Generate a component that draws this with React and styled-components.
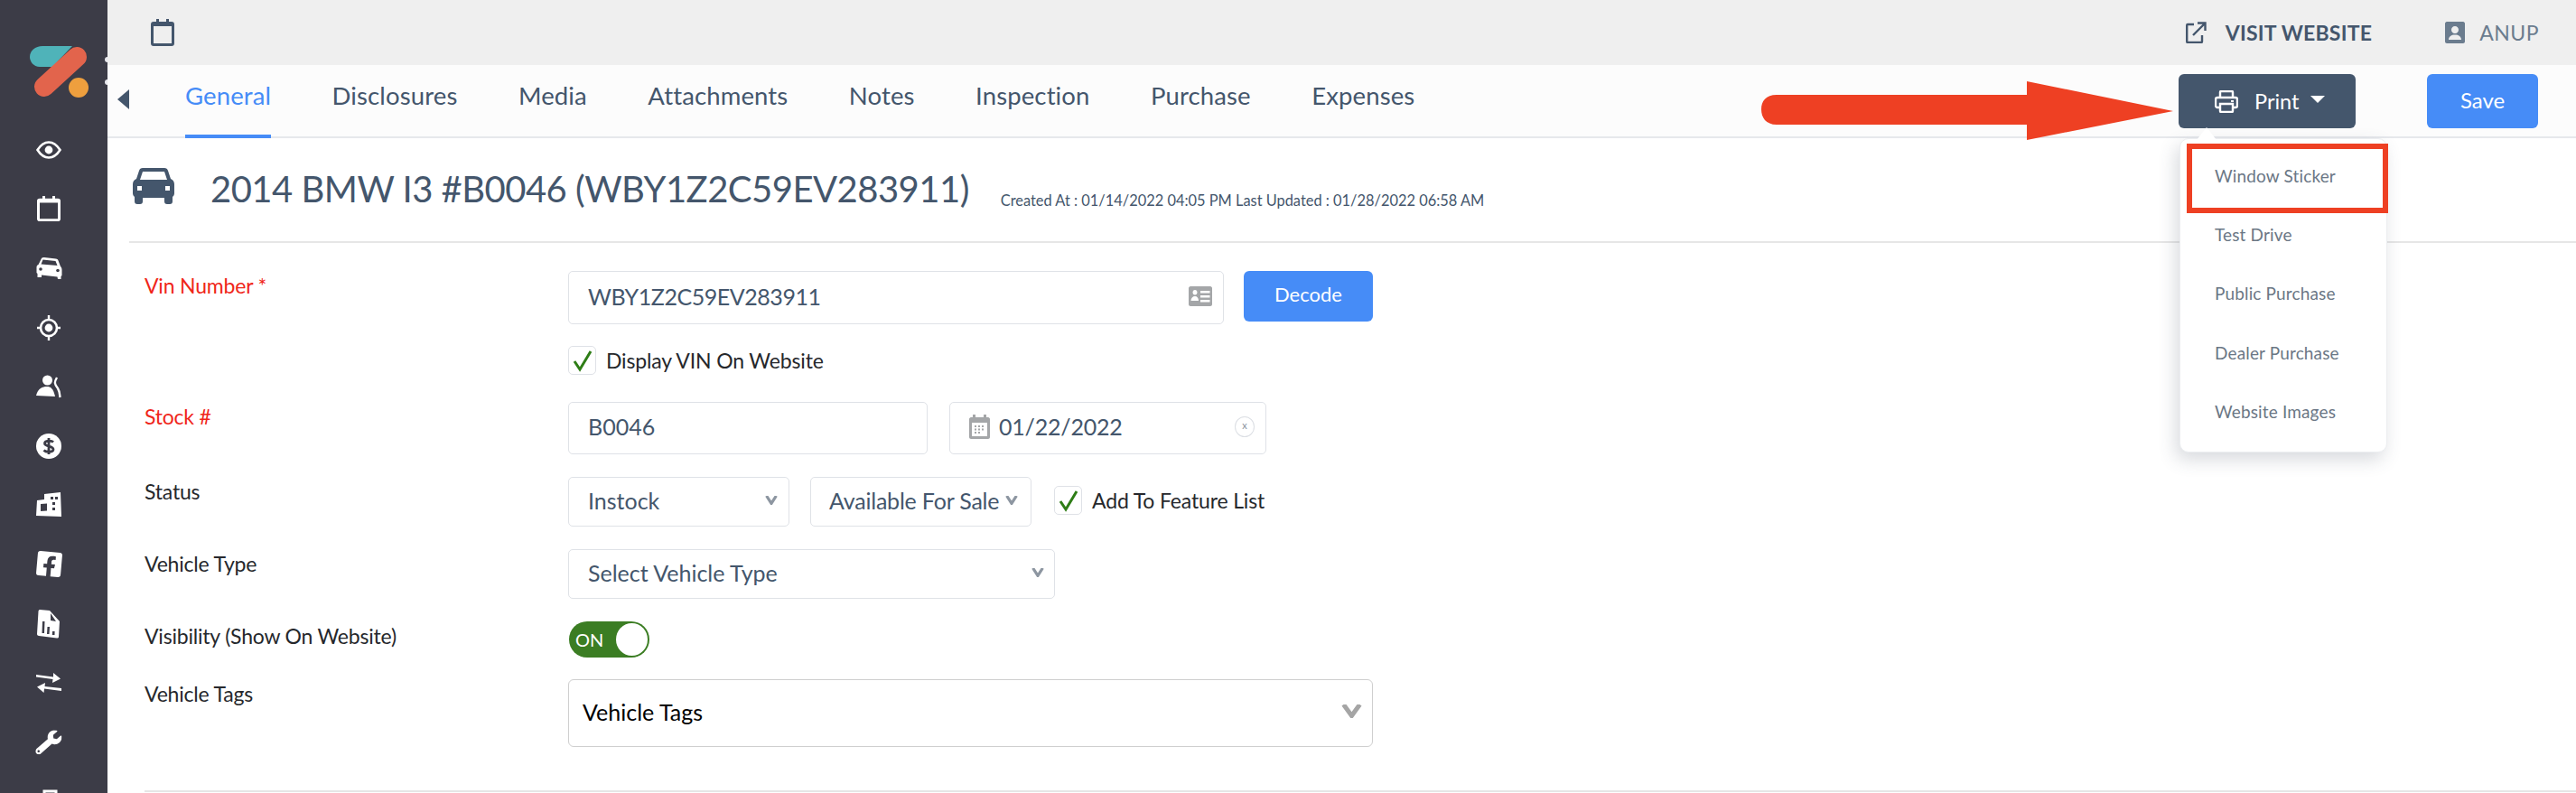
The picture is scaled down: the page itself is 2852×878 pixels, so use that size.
import React from 'react';
import styled, { createGlobalStyle } from 'styled-components';
import { FaFacebookSquare, FaWrench } from 'react-icons/fa';

const Global = createGlobalStyle`
  html, body { margin: 0; padding: 0; background: #fff; }
  body { font-family: Lato, "Open Sans", sans-serif; width: 2852px; height: 878px; overflow: hidden; }
  * { box-sizing: border-box; }
`;

const Page = styled.div`display: flex; width: 2852px; height: 878px; overflow: hidden;`;
const Sidebar = styled.aside`
  position: relative; width: 119px; flex: none; background: #3c3c47; height: 878px; overflow: hidden;
  display: flex; flex-direction: column; align-items: center; padding-right: 11px;
`;
const LogoBox = styled.div`margin-top: 51px; margin-left: 26px; height: 60px; width: 68px; flex: none;`;
const EdgeDot = styled.span`
  position: absolute; right: -3px; top: ${p => p.$top}px; width: 6px; height: 6px; border-radius: 50%; background: #e9e9ee;
`;
const NavList = styled.nav`display: flex; flex-direction: column; align-items: center; margin-top: 22px; flex: none;`;
const NavItem = styled.div`
  height: 65.6px; width: 40px; display: flex; align-items: center; justify-content: center; color: #fff; flex: none;
  svg { transform: rotate(${p => p.$tilt || 0}deg); }
`;

const Main = styled.main`flex: 1; min-width: 0; display: flex; flex-direction: column;`;
const TopBar = styled.header`
  height: 72px; flex: none; background: #efefef; display: flex; align-items: center; justify-content: space-between;
  padding: 0 41px 0 48px;
`;
const TopRight = styled.div`display: flex; align-items: center;`;
const TopLink = styled.span`
  display: flex; align-items: center; gap: ${p => p.$gap}px; margin-left: ${p => p.$ml || 0}px;
  font-size: 23px; font-weight: ${p => p.$weight}; color: ${p => p.$color}; letter-spacing: ${p => p.$ls || 0}px;
`;

const TabBar = styled.div`
  height: 81px; flex: none; background: #fcfcfc; border-bottom: 2px solid #e6e8ec; display: flex; padding-left: 11px; padding-right: 42px;
  align-items: flex-start;
`;
const BackArrow = styled.span`
  width: 0; height: 0; border-style: solid; border-width: 11px 13px 11px 0; border-color: transparent #44566c transparent transparent;
  margin-top: 27px; margin-right: 62px; flex: none;
`;
const Tabs = styled.div`display: flex; gap: 67.5px; flex: 1;`;
const Tab = styled.div`
  height: 81px; padding-top: 14px; line-height: 40px; font-size: 27.5px; letter-spacing: 0.12px;
  color: ${p => p.$active ? '#468cf7' : '#44566c'};
  border-bottom: ${p => p.$active ? '4px solid #468cf7' : '0'};
`;
const Actions = styled.div`display: flex; gap: 79px; margin-top: 10px;`;
const PrintWrap = styled.div`position: relative;`;
const PrintButton = styled.div`
  width: 196px; height: 60px; background: #44566c; border-radius: 6px; color: #fff; font-size: 23.5px;
  display: flex; align-items: center; padding-left: 40px;
`;
const PrintLabel = styled.span`margin-left: 18px;`;
const Caret = styled.span`
  margin-left: 13px; margin-top: -4px; width: 0; height: 0; border-style: solid; border-width: 8px 8px 0 8px; border-color: #fff transparent transparent transparent;
`;
const SaveButton = styled.div`
  width: 123px; height: 60px; background: #468cf7; border-radius: 6px; color: #fff; font-size: 24px; padding-bottom: 4px;
  display: flex; align-items: center; justify-content: center;
`;
const ArrowMark = styled.svg`position: absolute; left: -462px; top: 6px;`;
const Menu = styled.div`
  position: absolute; z-index: 3; left: 1px; top: 71px; width: 230px; height: 348px; background: #fff; border: 1px solid #eceef1; border-radius: 10px;
  box-shadow: -4px 8px 20px rgba(60,70,90,.2); padding-top: 10px;
`;
const MenuNub = styled.span`
  position: absolute; left: 18px; top: -13px; width: 0; height: 0; border-style: solid; border-width: 0 11px 14px 11px;
  border-color: transparent transparent #fff transparent;
`;
const MenuItem = styled.div`
  height: 65.2px; padding-left: 38px; padding-top: 19px; line-height: 24px; font-size: 19px; color: #6b7785; letter-spacing: 0.15px;
`;
const RedBox = styled.div`
  position: absolute; left: 7px; top: 5px; width: 223px; height: 77px; border: 6px solid #ee4023;
`;

const TitleRow = styled.div`
  height: 114px; flex: none; display: flex; align-items: flex-start; padding-left: 28px;
`;
const CarWrap = styled.div`margin-top: 33px; width: 46px; height: 40px; color: #44566c;`;
const Title = styled.h1`
  margin: 30px 0 0 40px; font-weight: 400; font-size: 40px; line-height: 52px; color: #44566c; white-space: nowrap; letter-spacing: -0.52px;
`;
const Meta = styled.span`margin: 59px 0 0 35px; font-size: 16.4px; line-height: 20px; color: #44566c; white-space: nowrap;`;
const Rule = styled.hr`
  margin: ${p => p.$mt || 0}px 0 0 ${p => p.$ml}px; border: 0; height: 2px; background: #e6e6e6; flex: none;
`;
const Form = styled.div`padding-left: 41px; display: flex; flex-direction: column;`;
const Row = styled.div`
  display: grid; grid-template-columns: 469px 1fr; margin-top: ${p => p.$mt}px; flex: none;
`;
const Label = styled.div`
  padding-top: 4px; line-height: 24px; font-size: 23px; letter-spacing: -0.2px; color: ${p => p.$req ? '#f0261a' : '#26282c'}; white-space: nowrap;
`;
const Controls = styled.div`display: flex; align-items: flex-start; gap: ${p => p.$gap || 0}px;`;
const Field = styled.div`
  position: relative; width: ${p => p.$w}px; height: ${p => p.$h}px; flex: none; background: #fff;
  border: 1px solid #dfe2e7; border-radius: 5px; display: flex; align-items: center; padding-left: ${p => p.$pl || 21}px;
  font-size: 25px; color: #44566c; white-space: nowrap; justify-content: space-between; padding-right: ${p => p.$pr || 12}px; padding-bottom: 4px;
  letter-spacing: ${p => p.$ls || 0}px;
`;
const DateField = styled(Field)`justify-content: flex-start; gap: 10px;`;
const ClearBtn = styled.span`
  margin-left: auto; margin-right: 0; width: 22px; height: 23px; border: 1px solid #dcdfe4; border-radius: 50%;
  display: flex; align-items: center; justify-content: center; font-size: 11px; line-height: 1; color: #8a939e; padding-bottom: 3px;
`;
const DecodeButton = styled.div`
  width: 143px; height: 56px; margin-left: 22px; background: #468cf7; border-radius: 6px; color: #fff; font-size: 22px; padding-bottom: 5px;
  display: flex; align-items: center; justify-content: center; flex: none;
`;
const CheckLine = styled.div`display: flex; align-items: center; gap: 11px; font-size: 23px; letter-spacing: -0.15px; color: #26282c; white-space: nowrap; margin: ${p => p.$m || 0};`;
const CheckBox = styled.span`
  width: 31px; height: 32px; border: 1px solid #dfe2e7; border-radius: 5px; display: flex; align-items: center; justify-content: center; flex: none; background: #fff;
`;
const Toggle = styled.div`
  position: relative; width: 89px; height: 40px; margin-left: 1px; border-radius: 20px; background: #3b7d23; color: #fff; font-size: 20px;
  display: flex; align-items: center; padding-left: 7px;
`;
const Knob = styled.span`
  position: absolute; right: 2px; top: 2px; width: 35px; height: 36px; border-radius: 50%; background: #fff;
`;
const TagSelect = styled(Field)`
  border-color: #cfcfcf; border-radius: 6px; color: #000; padding-left: 15px; padding-right: 11px;
`;

const Chevron = ({ w = 14, h = 10, color = '#8d96a1', sw = 3.2 }) => (
  <svg width={w} height={h} viewBox={`0 0 ${w} ${h}`}><path d={`M${sw / 2} 0 L${w / 2} ${h - sw / 2} L${w - sw / 2} 0`} fill="none" stroke={color} strokeWidth={sw} /></svg>
);
const Check = () => (
  <svg width="22" height="26" viewBox="0 0 22 26"><path d="M2 14 L8 23 L20 3" fill="none" stroke="#2e7d16" strokeWidth="3" /></svg>
);
const CalendarOutline = ({ color, w = 26, h = 30, sw = 3 }) => (
  <svg width={w} height={h} viewBox="0 0 26 30" preserveAspectRatio="none">
    <rect x="1.5" y="4.5" width="23" height="24" rx="1.5" fill="none" stroke={color} strokeWidth={sw} />
    <rect x="1.5" y="4" width="23" height="4" fill={color} />
    <rect x="6" y="0" width="3" height="6" fill={color} />
    <rect x="17" y="0" width="3" height="6" fill={color} />
  </svg>
);
const Logo = () => (
  <svg width="68" height="60" viewBox="0 0 68 60">
    <path d="M14 0 H47 L25 23 H11 C4 23 0 17 0 12 C0 5 6 0 14 0 Z" fill="#4fb3b9" />
    <path d="M16 45 L52 12" stroke="#e2644c" strokeWidth="22" strokeLinecap="round" fill="none" />
    <circle cx="54" cy="46" r="11" fill="#ee9f3e" />
  </svg>
);
const Eye = () => (
  <svg width="28" height="20" viewBox="0 0 28 20">
    <path d="M1.5 10 C6 3 10 1.5 14 1.5 C18 1.5 22 3 26.5 10 C22 17 18 18.5 14 18.5 C10 18.5 6 17 1.5 10 Z" fill="none" stroke="#fff" strokeWidth="2.6" />
    <circle cx="14" cy="10" r="4.4" fill="#fff" />
  </svg>
);
const CarSide = () => (
  <svg width="29" height="26" viewBox="0 0 29 26">
    <path fillRule="evenodd" fill="#fff" d="M6 2 C6.5 1 8 1 9 1 L22 2.5 C23 2.6 24 3 24.5 4.5 L27 11 C28 12 28.5 13 28.5 15 V21 L27.5 22 V25 H24 L23.5 22.5 L6 20.5 V23 H1.5 V19 L0.5 18 V12 C0.5 10.5 1 9.5 2.5 9 Z M7.5 3.5 L5.5 8.5 L23.5 10 L21.5 5 Z" />
    <circle cx="5" cy="14" r="1.8" fill="#3c3c47" /><circle cx="24" cy="15.5" r="1.8" fill="#3c3c47" />
  </svg>
);
const Target = () => (
  <svg width="28" height="30" viewBox="0 0 28 30">
    <circle cx="14" cy="15" r="9" fill="none" stroke="#fff" strokeWidth="2.6" />
    <circle cx="14" cy="15" r="4.4" fill="#fff" />
    <path d="M14 1 V6 M14 24 V29 M1 15 H5.5 M22.5 15 H27" stroke="#fff" strokeWidth="2.4" />
  </svg>
);
const People = () => (
  <svg width="28" height="26" viewBox="0 0 28 26">
    <circle cx="12.5" cy="6" r="5.5" fill="#fff" />
    <path d="M0 23 C2 15 7 13 12 13 C16 13 19 15 21 24 Z" fill="#fff" />
    <path d="M23 3 C20 8 20 10 24 15 C26 18 26 21 26.5 25" fill="none" stroke="#fff" strokeWidth="2.4" />
  </svg>
);
const Dollar = () => (
  <svg width="28" height="28" viewBox="0 0 28 28">
    <circle cx="14" cy="14" r="14" fill="#fff" />
    <path d="M19 9.5 C17 7.5 9.5 7.5 9.5 11 C9.5 15 19 13 19 17.5 C19 21 11 21 8.5 18.5 M14 5 V23" fill="none" stroke="#3c3c47" strokeWidth="2.8" />
  </svg>
);
const Buildings = () => (
  <svg width="28" height="30" viewBox="0 0 28 30">
    <path fillRule="evenodd" fill="#fff" d="M9 3 L27 1 L28 28 L0 27 L1 10 L9 9 Z M5 14 V22 L12 21.5 V13.5 Z M16 6 V9 H19 V6 Z M21 6 V9 H24 V6 Z M18 12 V15 H21 V12 Z M18 18 V21 H21 V18 Z" />
  </svg>
);
const Report = () => (
  <svg width="26" height="32" viewBox="0 0 26 32">
    <path fillRule="evenodd" fill="#fff" d="M3 0 L14 1 L25 13 L24 30 C24 31 23 31.5 22 31.5 L2 29 C1 29 0 28 0 27 L1.5 2 C1.5 1 2 0 3 0 Z M15 4 V12 L21 13 Z M6 13 L5.5 26 H8 L8.5 13 Z M11.5 19 L11 27 H13.5 L14 19 Z M17 24 L16.8 28 H19.5 L19.6 24 Z" />
  </svg>
);
const Swap = () => (
  <svg width="28" height="22" viewBox="0 0 28 22">
    <path fill="#fff" d="M0 2 L19 4.5 L19 0 L27 6.5 L18 11 L18.5 7 L0 4.5 Z M10 11 L9.5 15 L28 17 V20 L9 17.5 L8.5 22 L1 15.5 Z" />
  </svg>
);
const Partial = () => (
  <svg width="28" height="30" viewBox="0 0 28 30">
    <path fill="none" stroke="#fff" strokeWidth="3" d="M9 28 V4 H22 V28 M2 12 H9" />
  </svg>
);
const CarFront = () => (
  <svg width="46" height="40" viewBox="0 0 46 40">
    <path fillRule="evenodd" fill="currentColor" d="M11 0 H35 C37 0 38.5 1 39 3 L42 12 C44.5 13 46 15 46 18 V28 C46 30 45 31 44 32 V37 C44 39 43 40 41 40 H38 C36 40 35 39 35 37 V33 H11 V37 C11 39 10 40 8 40 H5 C3 40 2 39 2 37 V32 C1 31 0 30 0 28 V18 C0 15 1.5 13 4 12 L7 3 C7.5 1 9 0 11 0 Z M11 4 L8 13 H38 L35 4 Z M5 20 V25 H10 V20 Z M36 20 V25 H41 V20 Z" />
  </svg>
);
const Printer = () => (
  <svg width="26" height="25" viewBox="0 0 26 25">
    <path fill="none" stroke="#fff" strokeWidth="2.4" d="M6 8 V2 C6 1.5 6.5 1 7 1 H19 C19.5 1 20 1.5 20 2 V8 M6 19 H3 C2 19 1 18 1 17 V10 C1 9 2 8 3 8 H23 C24 8 25 9 25 10 V17 C25 18 24 19 23 19 H20 M6 15 H20 V23 C20 23.5 19.5 24 19 24 H7 C6.5 24 6 23.5 6 23 Z" />
    <rect x="18" y="11" width="3" height="2" fill="#fff" />
  </svg>
);
const ExternalLink = () => (
  <svg width="23" height="24" viewBox="0 0 23 24">
    <path fill="none" stroke="#44566c" strokeWidth="2.4" d="M9 3 H2 C1.5 3 1.2 3.4 1.2 4 V22 C1.2 22.6 1.5 23 2 23 H17 C17.6 23 18 22.6 18 22 V15 M8 15 L21 2 M13 1.5 H21.5 V10" />
  </svg>
);
const UserSquare = () => (
  <svg width="22" height="24" viewBox="0 0 22 24">
    <path fillRule="evenodd" fill="#6b7c8e" d="M2 0 H20 C21 0 22 1 22 2 V22 C22 23 21 24 20 24 H2 C1 24 0 23 0 22 V2 C0 1 1 0 2 0 Z M11 5 C8.5 5 7 7 7 9 C7 11 8.5 13 11 13 C13.5 13 15 11 15 9 C15 7 13.5 5 11 5 Z M4 20 H18 C18 16.5 15 14.5 11 14.5 C7 14.5 4 16.5 4 20 Z" />
  </svg>
);
const IdCard = () => (
  <svg width="26" height="22" viewBox="0 0 26 22">
    <path fillRule="evenodd" fill="#a4a6a8" d="M2 0 H24 C25 0 26 1 26 2 V20 C26 21 25 22 24 22 H2 C1 22 0 21 0 20 V2 C0 1 1 0 2 0 Z M7 4 C5.5 4 4.5 5.3 4.5 6.8 C4.5 8.2 5.5 9.5 7 9.5 C8.5 9.5 9.5 8.2 9.5 6.8 C9.5 5.3 8.5 4 7 4 Z M2.5 16 H11 C11 13 9.5 11 7 11 C4.5 11 2.5 13 2.5 16 Z M13 5 V7.5 H23.5 V5 Z M13 10 V12.5 H23.5 V10 Z M13 15 V17.5 H23.5 V15 Z" />
  </svg>
);
const CalGray = () => (
  <svg width="23" height="27" viewBox="0 0 23 27">
    <path fillRule="evenodd" fill="#a4a6a8" d="M4 0 H7 V3 H16 V0 H19 V3 H21 C22 3 23 4 23 5 V25 C23 26 22 27 21 27 H2 C1 27 0 26 0 25 V5 C0 4 1 3 2 3 H4 Z M3 9 V24 H20 V9 Z" />
    <path stroke="#a4a6a8" strokeWidth="2" strokeDasharray="2 2" d="M6 13 H18 M6 16.5 H18 M6 20 H14" fill="none" />
  </svg>
);

const navIcons = [
  [<Eye />, 0], [<CalendarOutline color="#fff" w={26} h={28} />, 0], [<CarSide />, 0], [<Target />, 0], [<People />, 0], [<Dollar />, 0],
  [<Buildings />, 0], [<FaFacebookSquare size={31} />, 5], [<Report />, 0], [<Swap />, 0], [<FaWrench size={28} />, 4], [<Partial />, 0],
];
const tabs = ['General', 'Disclosures', 'Media', 'Attachments', 'Notes', 'Inspection', 'Purchase', 'Expenses'];
const menu = ['Window Sticker', 'Test Drive', 'Public Purchase', 'Dealer Purchase', 'Website Images'];

export default function App() {
  return (
    <Page>
      <Global />
      <Sidebar>
        <LogoBox><Logo /></LogoBox>
        <EdgeDot $top={63} />
        <EdgeDot $top={88} />
        <NavList>
          {navIcons.map(([icon, tilt], i) => <NavItem key={i} $tilt={tilt}>{icon}</NavItem>)}
        </NavList>
      </Sidebar>
      <Main>
        <TopBar>
          <CalendarOutline color="#44566c" />
          <TopRight>
            <TopLink $gap={21} $weight={700} $color="#44566c" $ls={0.2}><ExternalLink />VISIT WEBSITE</TopLink>
            <TopLink $gap={16} $ml={81} $weight={400} $color="#6b7c8e" $ls={0.5}><UserSquare />ANUP</TopLink>
          </TopRight>
        </TopBar>
        <TabBar>
          <BackArrow />
          <Tabs>
            {tabs.map((t, i) => <Tab key={t} $active={i === 0}>{t}</Tab>)}
          </Tabs>
          <Actions>
            <PrintWrap>
              <ArrowMark width="458" height="68" viewBox="0 0 458 68">
                <path d="M17 17 H294 V2 L456 35 L294 67 V50 H17 C5 50 0 42 0 33 C0 24 5 17 17 17 Z" fill="#ee4023" />
              </ArrowMark>
              <PrintButton><Printer /><PrintLabel>Print</PrintLabel><Caret /></PrintButton>
              <Menu>
                <MenuNub />
                {menu.map(m => <MenuItem key={m}>{m}</MenuItem>)}
                <RedBox />
              </Menu>
            </PrintWrap>
            <SaveButton>Save</SaveButton>
          </Actions>
        </TabBar>
        <TitleRow>
          <CarWrap><CarFront /></CarWrap>
          <Title>2014 BMW I3 #B0046 (WBY1Z2C59EV283911)</Title>
          <Meta>Created At : 01/14/2022 04:05 PM Last Updated : 01/28/2022 06:58 AM</Meta>
        </TitleRow>
        <Rule $ml={24} />
        <Form>
          <Row $mt={31}>
            <Label $req>Vin Number *</Label>
            <Controls>
              <Field $w={726} $h={59} $ls={-0.45}>WBY1Z2C59EV283911<IdCard /></Field>
              <DecodeButton>Decode</DecodeButton>
            </Controls>
          </Row>
          <Row $mt={24}>
            <span />
            <CheckLine><CheckBox><Check /></CheckBox>Display VIN On Website</CheckLine>
          </Row>
          <Row $mt={30}>
            <Label $req>Stock #</Label>
            <Controls $gap={24}>
              <Field $w={398} $h={58}>B0046</Field>
              <DateField $w={351} $h={58} $ls={-0.2}><CalGray />01/22/2022<ClearBtn>x</ClearBtn></DateField>
            </Controls>
          </Row>
          <Row $mt={25}>
            <Label>Status</Label>
            <Controls $gap={23}>
              <Field $w={245} $h={55}>Instock<Chevron /></Field>
              <Field $w={245} $h={55} $pr={14} $pl={20} $ls={-0.2}>Available For Sale<Chevron /></Field>
              <CheckLine $m="10px 0 0 2px"><CheckBox><Check /></CheckBox>Add To Feature List</CheckLine>
            </Controls>
          </Row>
          <Row $mt={25}>
            <Label>Vehicle Type</Label>
            <Field $w={539} $h={55} $pr={11}>Select Vehicle Type<Chevron /></Field>
          </Row>
          <Row $mt={25}>
            <Label>Visibility (Show On Website)</Label>
            <Toggle>ON<Knob /></Toggle>
          </Row>
          <Row $mt={24}>
            <Label>Vehicle Tags</Label>
            <TagSelect $w={891} $h={75}>Vehicle Tags<Chevron w={23} h={15} color="#a5a5a5" sw={5} /></TagSelect>
          </Row>
        </Form>
        <Rule $mt={48} $ml={41} />
      </Main>
    </Page>
  );
}
